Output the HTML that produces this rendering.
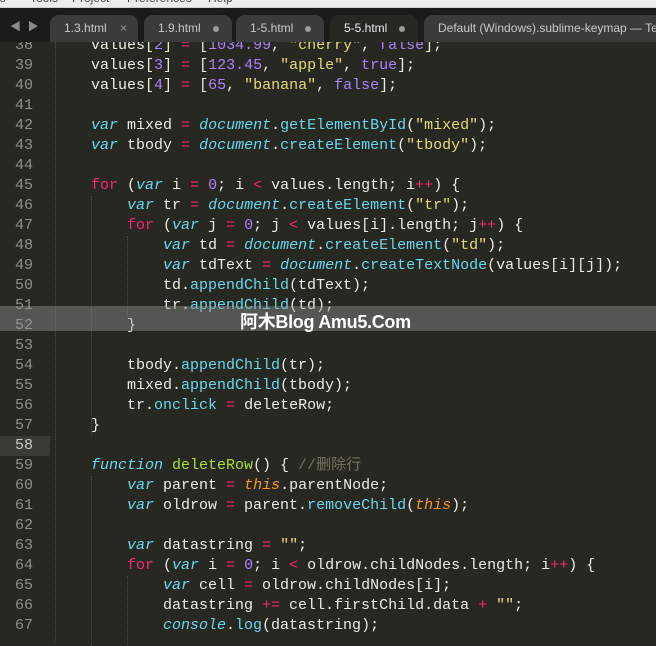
<!DOCTYPE html>
<html><head><meta charset="utf-8"><style>
*{margin:0;padding:0}
body{width:656px;height:637px;overflow:hidden;background:#272822;position:relative;font-family:"Liberation Mono","Noto Sans CJK SC",monospace;}
#menu{position:absolute;left:0;top:0;width:656px;height:7px;background:#ececec;border-bottom:1px solid #cfcfcf;overflow:hidden;font:12px "Liberation Sans",sans-serif;color:#444;}
#menu span{position:absolute;top:-9px}
#tabs{position:absolute;left:0;top:8px;width:656px;height:34px;background:#1b1b1a;overflow:hidden}
.tab{position:absolute;top:7px;height:27px;background:#3b3b39;border-radius:9px 9px 0 0;color:#c9c9c9;font:12px "Liberation Sans",sans-serif;line-height:27px;padding-left:14px;box-sizing:border-box;white-space:nowrap;overflow:hidden}
.tab.act{background:#272822;color:#ececec}
.tab .d{display:inline-block;width:6px;height:6px;border-radius:3px;background:#9a9a9a;margin-left:12px;vertical-align:middle}
.ln{position:absolute;left:0;width:33px;text-align:right;color:#8f908a;font-size:15px;line-height:20px;height:20px}
.cl{position:absolute;font-size:15px;line-height:20px;height:20px;color:#ecece4;white-space:pre}
.k{color:#66d9ef;font-style:italic}
.m{color:#66d9ef}
.r{color:#f92672}
.s{color:#e6db74}
.n{color:#ae81ff}
.g{color:#a6e22e}
.t{color:#fd971f;font-style:italic}
.c{color:#75715e}
.guide{position:absolute;width:0;border-left:1px dotted #4a4b44}
#wm{position:absolute;left:0;top:306px;width:656px;height:25px;background:rgba(150,150,150,0.42)}
#wmt{position:absolute;left:240px;top:308px;font:bold 18px "Liberation Sans","Noto Sans CJK SC",sans-serif;color:#fff;white-space:nowrap;letter-spacing:-0.3px}
</style></head><body>
<div id="gut58" style="position:absolute;left:0;top:436px;width:50px;height:20px;background:#3a3b35"></div>
<div class="guide" style="left:55px;top:42px;height:600px"></div>
<div class="guide" style="left:91px;top:196px;height:240px"></div>
<div class="guide" style="left:127px;top:236px;height:80px"></div>
<div class="guide" style="left:91px;top:476px;height:170px"></div>
<div class="guide" style="left:127px;top:576px;height:70px"></div>

<div class="ln" style="top:36px">38</div><div class="cl" style="left:91px;top:36px">values[<span class="n">2</span>] <span class="r">=</span> [<span class="n">1034.99</span>, <span class="s">"cherry"</span>, <span class="n">false</span>];</div>
<div class="ln" style="top:56px">39</div><div class="cl" style="left:91px;top:56px">values[<span class="n">3</span>] <span class="r">=</span> [<span class="n">123.45</span>, <span class="s">"apple"</span>, <span class="n">true</span>];</div>
<div class="ln" style="top:76px">40</div><div class="cl" style="left:91px;top:76px">values[<span class="n">4</span>] <span class="r">=</span> [<span class="n">65</span>, <span class="s">"banana"</span>, <span class="n">false</span>];</div>
<div class="ln" style="top:96px">41</div>
<div class="ln" style="top:116px">42</div><div class="cl" style="left:91px;top:116px"><span class="k">var</span> mixed <span class="r">=</span> <span class="k">document</span>.<span class="m">getElementById</span>(<span class="s">"mixed"</span>);</div>
<div class="ln" style="top:136px">43</div><div class="cl" style="left:91px;top:136px"><span class="k">var</span> tbody <span class="r">=</span> <span class="k">document</span>.<span class="m">createElement</span>(<span class="s">"tbody"</span>);</div>
<div class="ln" style="top:156px">44</div>
<div class="ln" style="top:176px">45</div><div class="cl" style="left:91px;top:176px"><span class="r">for</span> (<span class="k">var</span> i <span class="r">=</span> <span class="n">0</span>; i <span class="r">&lt;</span> values.length; i<span class="r">++</span>) {</div>
<div class="ln" style="top:196px">46</div><div class="cl" style="left:127px;top:196px"><span class="k">var</span> tr <span class="r">=</span> <span class="k">document</span>.<span class="m">createElement</span>(<span class="s">"tr"</span>);</div>
<div class="ln" style="top:216px">47</div><div class="cl" style="left:127px;top:216px"><span class="r">for</span> (<span class="k">var</span> j <span class="r">=</span> <span class="n">0</span>; j <span class="r">&lt;</span> values[i].length; j<span class="r">++</span>) {</div>
<div class="ln" style="top:236px">48</div><div class="cl" style="left:163px;top:236px"><span class="k">var</span> td <span class="r">=</span> <span class="k">document</span>.<span class="m">createElement</span>(<span class="s">"td"</span>);</div>
<div class="ln" style="top:256px">49</div><div class="cl" style="left:163px;top:256px"><span class="k">var</span> tdText <span class="r">=</span> <span class="k">document</span>.<span class="m">createTextNode</span>(values[i][j]);</div>
<div class="ln" style="top:276px">50</div><div class="cl" style="left:163px;top:276px">td.<span class="m">appendChild</span>(tdText);</div>
<div class="ln" style="top:296px">51</div><div class="cl" style="left:163px;top:296px">tr.<span class="m">appendChild</span>(td);</div>
<div class="ln" style="top:316px">52</div><div class="cl" style="left:127px;top:316px">}</div>
<div class="ln" style="top:336px">53</div>
<div class="ln" style="top:356px">54</div><div class="cl" style="left:127px;top:356px">tbody.<span class="m">appendChild</span>(tr);</div>
<div class="ln" style="top:376px">55</div><div class="cl" style="left:127px;top:376px">mixed.<span class="m">appendChild</span>(tbody);</div>
<div class="ln" style="top:396px">56</div><div class="cl" style="left:127px;top:396px">tr.<span class="m">onclick</span> <span class="r">=</span> deleteRow;</div>
<div class="ln" style="top:416px">57</div><div class="cl" style="left:91px;top:416px">}</div>
<div class="ln" style="top:436px;color:#c8c8c0">58</div>
<div class="ln" style="top:456px">59</div><div class="cl" style="left:91px;top:456px"><span class="k">function</span> <span class="g">deleteRow</span>() { <span class="c">//删除行</span></div>
<div class="ln" style="top:476px">60</div><div class="cl" style="left:127px;top:476px"><span class="k">var</span> parent <span class="r">=</span> <span class="t">this</span>.parentNode;</div>
<div class="ln" style="top:496px">61</div><div class="cl" style="left:127px;top:496px"><span class="k">var</span> oldrow <span class="r">=</span> parent.<span class="m">removeChild</span>(<span class="t">this</span>);</div>
<div class="ln" style="top:516px">62</div>
<div class="ln" style="top:536px">63</div><div class="cl" style="left:127px;top:536px"><span class="k">var</span> datastring <span class="r">=</span> <span class="s">""</span>;</div>
<div class="ln" style="top:556px">64</div><div class="cl" style="left:127px;top:556px"><span class="r">for</span> (<span class="k">var</span> i <span class="r">=</span> <span class="n">0</span>; i <span class="r">&lt;</span> oldrow.childNodes.length; i<span class="r">++</span>) {</div>
<div class="ln" style="top:576px">65</div><div class="cl" style="left:163px;top:576px"><span class="k">var</span> cell <span class="r">=</span> oldrow.childNodes[i];</div>
<div class="ln" style="top:596px">66</div><div class="cl" style="left:163px;top:596px">datastring <span class="r">+=</span> cell.firstChild.data <span class="r">+</span> <span class="s">""</span>;</div>
<div class="ln" style="top:616px">67</div><div class="cl" style="left:163px;top:616px"><span class="k">console</span>.<span class="m">log</span>(datastring);</div>

<div id="wm"></div>
<div id="wmt">阿木Blog Amu5.Com</div>

<div id="menu"><span style="left:-4px">to</span><span style="left:30px">Tools</span><span style="left:72px">Project</span><span style="left:127px">Preferences</span><span style="left:208px">Help</span></div>
<div id="tabs">
<div style="position:absolute;left:10px;top:10px;color:#8a8a8a;font-size:11px">◀ ▶</div>
<div class="tab" style="left:50px;width:88px">1.3.html <span style="color:#999;margin-left:10px">×</span></div>
<div class="tab" style="left:144px;width:88px">1.9.html<span class="d"></span></div>
<div class="tab" style="left:236px;width:88px">1-5.html<span class="d"></span></div>
<div class="tab act" style="left:330px;width:88px">5-5.html<span class="d"></span></div>
<div class="tab" style="left:424px;width:260px">Default (Windows).sublime-keymap — Terminal</div>
</div>
</body></html>
